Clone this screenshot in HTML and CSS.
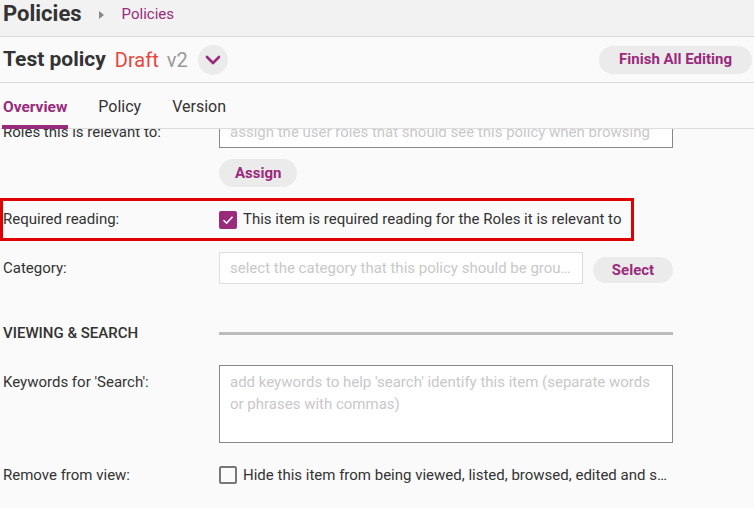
FILE: index.html
```html
<!DOCTYPE html>
<html>

<head lang="en">
  <meta charset="UTF-8">
  <title>Test policy</title>
  <link rel="stylesheet" href="styles.css">
</head>

<body>
  <div class="topbar">
    <h1>Policies</h1>
    <span class="crumb-arrow"></span>
    <a href="#" class="crumb">Policies</a>
  </div>

  <div class="titlebar">
    <h2>Test policy</h2>
    <span class="status">Draft</span>
    <span class="ver">v2</span>
    <a href="javascript:;" class="round-btn">
      <svg width="16" height="10" viewBox="0 0 16 10"><path d="M2 2 L8 8 L14 2" fill="none" stroke="#9a2a7c" stroke-width="2.6" stroke-linecap="round" stroke-linejoin="round"/></svg>
    </a>
    <a href="javascript:;" class="pill finish">Finish All Editing</a>
  </div>

  <div class="tabs">
    <a href="#" class="tab active">Overview</a>
    <a href="#" class="tab">Policy</a>
    <a href="#" class="tab">Version</a>
  </div>

  <div class="content">
    <div class="scroll">
      <!-- roles -->
      <div class="row">
        <div class="label">Roles this is relevant to:</div>
        <div class="input wide">assign the user roles that should see this policy when browsing</div>
      </div>
      <div class="row indent">
        <a href="javascript:;" class="pill">Assign</a>
      </div>

      <!-- required reading -->
      <div class="row highlight">
        <div class="label">Required reading:</div>
        <span class="check on">
          <svg width="14" height="14" viewBox="0 0 14 14"><path d="M2.5 7.2 L5.6 10.2 L11.5 3.8" fill="none" stroke="#fff" stroke-width="1.6"/></svg>
        </span>
        <span class="check-text">This item is required reading for the Roles it is relevant to</span>
      </div>

      <!-- category -->
      <div class="row cat">
        <div class="label">Category:</div>
        <div class="input short">select the category that this policy should be grou…</div>
        <a href="javascript:;" class="pill select">Select</a>
      </div>

      <!-- section -->
      <div class="row section">
        <div class="label">VIEWING &amp; SEARCH</div>
        <div class="rule"></div>
      </div>

      <div class="row top">
        <div class="label">Keywords for 'Search':</div>
        <div class="input area">add keywords to help 'search' identify this item (separate words or phrases with commas)</div>
      </div>

      <div class="row remove">
        <div class="label">Remove from view:</div>
        <span class="check"></span>
        <span class="check-text">Hide this item from being viewed, listed, browsed, edited and s…</span>
      </div>
    </div>
  </div>
</body>

</html>
```

FILE: styles.css
```css
/* reset */
body,
h1,
h2,
p,
ul,
li {
  margin: 0;
  padding: 0;
}

body {
  font: 15px/1.4 Roboto, "Liberation Sans", sans-serif;
  color: #333;
  background: #fafafa;
  width: 754px;
  height: 508px;
  overflow: hidden;
}

a {
  text-decoration: none;
  color: #9a2a7c;
}

/* top bar */
.topbar {
  height: 36px;
  background: #f2f2f2;
  border-bottom: 1px solid #dcdcdc;
  display: flex;
  align-items: flex-start;
  padding-left: 3px;
}

.topbar h1 {
  font-size: 22px;
  line-height: 28px;
  font-weight: 700;
  color: #333;
}

.crumb-arrow {
  width: 0;
  height: 0;
  border-left: 5px solid #888;
  border-top: 4px solid transparent;
  border-bottom: 4px solid transparent;
  margin: 11px 0 0 17px;
}

.crumb {
  font-size: 15px;
  line-height: 28px;
  margin-left: 18px;
}

/* title bar */
.titlebar {
  height: 45px;
  border-bottom: 1px solid #dcdcdc;
  display: flex;
  align-items: center;
  padding-left: 3px;
}

.titlebar h2 {
  font-size: 21px;
  font-weight: 700;
  color: #333;
}

.status {
  font-size: 20px;
  color: #e8453c;
  margin-left: 9px;
}

.ver {
  font-size: 20px;
  color: #999;
  margin-left: 8px;
}

.round-btn {
  width: 30px;
  height: 30px;
  border-radius: 50%;
  background: #ebebeb;
  display: flex;
  align-items: center;
  justify-content: center;
  margin-left: 10px;
}

.pill {
  display: inline-flex;
  align-items: center;
  justify-content: center;
  height: 28px;
  padding: 0 16px;
  border-radius: 14px;
  background: #ebebeb;
  color: #9a2a7c;
  font-size: 15px;
  font-weight: 700;
}

.finish {
  margin-left: auto;
  margin-right: 2px;
  padding: 0 20px;
}

/* tabs */
.tabs {
  height: 45px;
  border-bottom: 1px solid #dcdcdc;
  display: flex;
  align-items: flex-end;
  padding-left: 2px;
  position: relative;
  z-index: 2;
  background: #fafafa;
}

.tab {
  color: #333;
  font-size: 16px;
  line-height: 20px;
  padding: 0 1px 8px;
  margin-right: 29px;
  border-bottom: 4px solid transparent;
  margin-bottom: -1px;
}

.tab.active {
  color: #9a2a7c;
  font-weight: 700;
  font-size: 15.5px;
  border-bottom-color: #9a2a7c;
}

/* content */
.content {
  height: 380px;
  overflow: hidden;
}

.scroll {
  margin-top: -13px;
  width: 680px;
}

.row {
  display: flex;
  align-items: center;
}

.label {
  width: 216px;
  padding-left: 3px;
  flex-shrink: 0;
}

.input {
  box-sizing: border-box;
  height: 32px;
  border: 1px solid #888;
  background: #fff;
  color: #c8c8c8;
  padding: 0 10px;
  line-height: 30px;
  white-space: nowrap;
  overflow: hidden;
}

.wide {
  width: 454px;
}

.indent {
  padding-left: 219px;
  margin-top: 11px;
}

.highlight {
  box-sizing: border-box;
  width: 634px;
  height: 43px;
  border: 3px solid #e10000;
  margin-top: 11px;
}

.highlight .label {
  padding-left: 0;
}

.check {
  box-sizing: border-box;
  width: 18px;
  height: 18px;
  border: 2px solid #777;
  border-radius: 2px;
  display: flex;
  align-items: center;
  justify-content: center;
  flex-shrink: 0;
}

.check.on {
  background: #9a2a7c;
  border-color: #9a2a7c;
}

.check-text {
  margin-left: 6px;
  white-space: nowrap;
}

.cat {
  margin-top: 11px;
}

.short {
  width: 364px;
  border-color: #ddd;
}

.select {
  margin-left: 10px;
  width: 80px;
  padding: 0;
  height: 26px;
  margin-top: 4px;
}

.section {
  margin-top: 39px;
  height: 20px;
}

.section .label {
  font-size: 15px;
  font-weight: 500;
}

.rule {
  width: 454px;
  height: 3px;
  background: #bbb;
}

.top {
  align-items: flex-start;
  margin-top: 22px;
}

.top .label {
  line-height: 22px;
  margin-top: 6px;
}

.area {
  width: 454px;
  height: 78px;
  white-space: normal;
  line-height: 22px;
  padding-top: 5px;
}

.remove {
  margin-top: 21px;
  height: 22px;
}
```
